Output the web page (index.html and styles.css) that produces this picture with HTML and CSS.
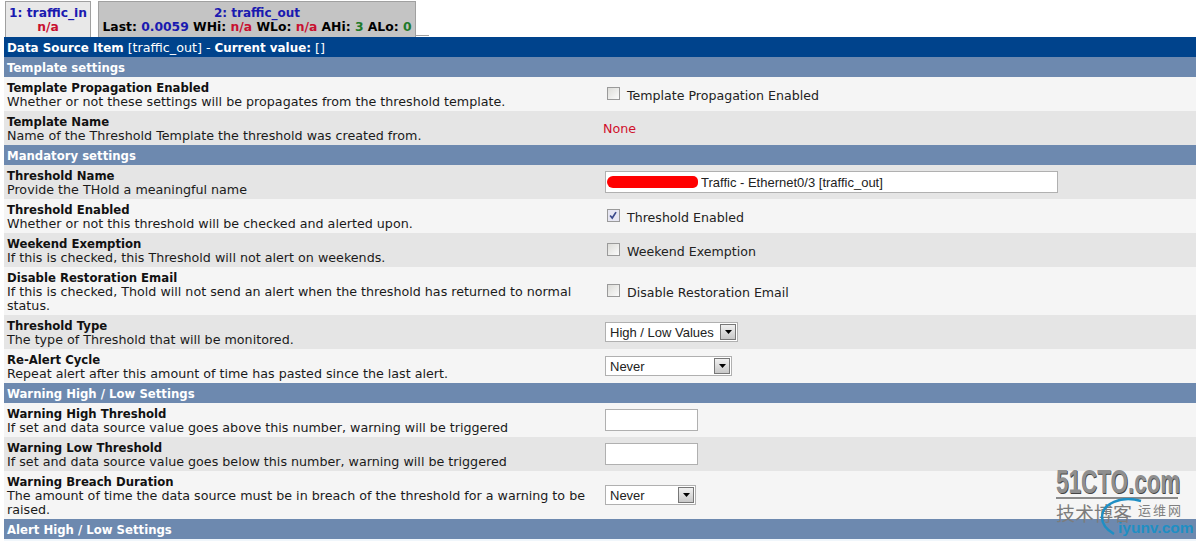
FILE: index.html
```html
<!DOCTYPE html>
<html lang="en">
<head>
<meta charset="utf-8">
<title>Thold</title>
<link rel="stylesheet" href="styles.css">
</head>
<body>
<div class="tabs">
  <div class="tab tab-first"><div class="ds">1: traffic_in</div><div class="na">n/a</div></div>
  <div class="tab tab-active"><div class="ds ds-two">2: traffic_out</div><div class="stats">Last: <span class="blue">0.0059</span> WHi: <span class="na">n/a</span> WLo: <span class="na">n/a</span> AHi: <span class="green">3</span> ALo: <span class="green">0</span></div></div>
  <div class="tab-line"></div>
</div>
<div class="panel">
  <div class="title"><b>Data Source Item</b> [traffic_out] - <b>Current value:</b> []</div>
  <div class="section">Template settings</div>
  <div class="row light"><div class="desc"><b>Template Propagation Enabled</b><br>Whether or not these settings will be propagates from the threshold template.</div><div class="ctl"><label class="check"><span class="box"></span>Template Propagation Enabled</label></div></div>
  <div class="row dark"><div class="desc"><b>Template Name</b><br>Name of the Threshold Template the threshold was created from.</div><div class="ctl none">None</div></div>
  <div class="section">Mandatory settings</div>
  <div class="row dark"><div class="desc"><b>Threshold Name</b><br>Provide the THold a meaningful name</div><div class="ctl"><div class="name-wrap"><input class="text name" type="text" value="Traffic - Ethernet0/3 [traffic_out]"><span class="scribble"></span></div></div></div>
  <div class="row light"><div class="desc"><b>Threshold Enabled</b><br>Whether or not this threshold will be checked and alerted upon.</div><div class="ctl"><label class="check"><span class="box checked"><svg viewBox="0 0 13 13" width="11" height="11"><path d="M2.5 6.5 L5 9.5 L9.5 2.5" fill="none" stroke="#3b4a8c" stroke-width="2"/></svg></span>Threshold Enabled</label></div></div>
  <div class="row dark"><div class="desc"><b>Weekend Exemption</b><br>If this is checked, this Threshold will not alert on weekends.</div><div class="ctl"><label class="check"><span class="box"></span>Weekend Exemption</label></div></div>
  <div class="row light"><div class="desc"><b>Disable Restoration Email</b><br>If this is checked, Thold will not send an alert when the threshold has returned to normal status.</div><div class="ctl"><label class="check"><span class="box"></span>Disable Restoration Email</label></div></div>
  <div class="row dark"><div class="desc"><b>Threshold Type</b><br>The type of Threshold that will be monitored.</div><div class="ctl"><div class="select w-type"><span class="val">High / Low Values</span><span class="arrow"><svg viewBox="0 0 7 4" width="7" height="4"><path d="M0 0H7L3.5 4Z" fill="#000"/></svg></span></div></div></div>
  <div class="row light"><div class="desc"><b>Re-Alert Cycle</b><br>Repeat alert after this amount of time has pasted since the last alert.</div><div class="ctl"><div class="select w-cycle"><span class="val">Never</span><span class="arrow"><svg viewBox="0 0 7 4" width="7" height="4"><path d="M0 0H7L3.5 4Z" fill="#000"/></svg></span></div></div></div>
  <div class="section">Warning High / Low Settings</div>
  <div class="row light"><div class="desc"><b>Warning High Threshold</b><br>If set and data source value goes above this number, warning will be triggered</div><div class="ctl"><input class="text small" type="text"></div></div>
  <div class="row dark"><div class="desc"><b>Warning Low Threshold</b><br>If set and data source value goes below this number, warning will be triggered</div><div class="ctl"><input class="text small" type="text"></div></div>
  <div class="row light"><div class="desc"><b>Warning Breach Duration</b><br>The amount of time the data source must be in breach of the threshold for a warning to be raised.</div><div class="ctl"><div class="select w-breach"><span class="val">Never</span><span class="arrow"><svg viewBox="0 0 7 4" width="7" height="4"><path d="M0 0H7L3.5 4Z" fill="#000"/></svg></span></div></div></div>
  <div class="section">Alert High / Low Settings</div>
</div>
<div class="watermark">
  <div class="wm-51">51CTO.com</div>
  <div class="wm-rule"></div>
  <div class="wm-tech">技术博客</div>
  <div class="wm-ops">运维网</div>
  <div class="wm-iyunv">iyunv.com</div>
  <svg class="wm-arc" viewBox="0 0 50 40" width="50" height="40"><path d="M44 3 C24 -3 5 6 5 19 C5 27 10 32 17 36" fill="none" stroke="#1f8fc4" stroke-width="2.5"/></svg>
</div>
</body>
</html>
```
FILE: styles.css
```css
html, body {
  margin: 0;
  padding: 0;
  background: #fff;
}
body {
  position: relative;
  width: 1199px;
  height: 541px;
  overflow: hidden;
  padding-left: 4px;
  padding-right: 3px;
  box-sizing: border-box;
  font-family: "DejaVu Sans", Verdana, sans-serif;
  font-size: 12.7px;
  line-height: 14px;
  color: #000;
}
b {
  font-size: 11.7px;
}
.tabs {
  display: flex;
  gap: 7px;
  height: 37px;
  margin-left: 1px;
  align-items: flex-end;
}
.tab {
  height: 36px;
  box-sizing: border-box;
  border: 1px solid #a0a0a0;
  border-bottom: 0;
  text-align: center;
  padding: 4px 0 0;
  font-weight: bold;
  font-size: 12.3px;
  line-height: 14px;
  white-space: nowrap;
}
.ds-two {
  font-size: 12px;
}
.stats {
  font-size: 12.35px;
}
.tab-first {
  width: 86px;
  background: #e8e8e8;
}
.tab-active {
  width: 318px;
  background: #c4c4c4;
}
.tab-line {
  width: 13px;
  height: 1px;
  margin-left: -7px;
  margin-bottom: 1px;
  background: #a0a0a0;
}
.ds { color: #1a1ab0; }
.na { color: #c81030; }
.blue { color: #1a1ab0; }
.green { color: #1f7a2a; }
.panel {
  width: 1192px;
  background: #f0f6fb;
  height: 504px;
}
.title {
  height: 20px;
  background: #00438c;
  color: #fff;
  line-height: 21px;
  padding-left: 3px;
}
.title b {
  font-size: 11.9px;
}
.section {
  height: 20px;
  background: #6d89af;
  color: #fff;
  font-weight: bold;
  font-size: 11.7px;
  line-height: 22px;
  padding-left: 3px;
}
.row {
  display: flex;
  align-items: center;
  min-height: 34px;
  color: #1a1a1a;
}
.light { background: #f5f5f5; }
.dark { background: #e5e5e5; }
.desc {
  width: 601px;
  box-sizing: border-box;
  padding: 4px 15px 2px 3px;
  flex: none;
}
.desc b { color: #111; }
.ctl {
  flex: 1;
}
.check {
  display: flex;
  align-items: center;
  gap: 7px;
  padding: 4px 0 0 2px;
  font-size: 12.6px;
  color: #222;
}
.box {
  width: 13px;
  height: 13px;
  box-sizing: border-box;
  border: 1px solid #9a9a9a;
  background: linear-gradient(135deg, #dcdcd8, #fbfbfb);
  display: flex;
  align-items: center;
  justify-content: center;
  position: relative;
  top: -3px;
}
.checked { background: #e6e6f2; }
.none {
  color: #d0102c;
  margin-left: -2px;
  padding-top: 2px;
}
.name-wrap {
  position: relative;
  width: 453px;
}
.text {
  display: block;
  box-sizing: border-box;
  border: 1px solid #b0b0b0;
  background: #fff;
  height: 22px;
  margin: 0;
  outline: 0;
  font-family: "Liberation Sans", Arial, sans-serif;
  font-size: 13px;
  color: #222;
}
.name {
  width: 453px;
  padding: 0 0 0 95px;
}
.small {
  width: 93px;
  padding: 0 3px;
}
.scribble {
  position: absolute;
  left: 2px;
  top: 5px;
  width: 91px;
  height: 12px;
  border-radius: 6px 5px 5px 6px;
  background: #f00;
}
.select {
  display: flex;
  align-items: center;
  justify-content: space-between;
  box-sizing: border-box;
  height: 20px;
  border: 1px solid #b0b0b0;
  background: #fff;
  font-family: "Liberation Sans", Arial, sans-serif;
  font-size: 13px;
  color: #222;
  padding-left: 4px;
}
.val {
  padding-top: 1px;
}
.w-type { width: 133px; }
.w-cycle { width: 127px; }
.w-breach { width: 91px; }
.arrow {
  width: 16px;
  height: 16px;
  margin-right: 1px;
  box-sizing: border-box;
  border: 1px solid #777;
  background: linear-gradient(180deg, #f0f0f0, #c8c8c8);
  display: flex;
  align-items: center;
  justify-content: center;
}
.watermark {
  position: absolute;
  left: 1050px;
  top: 465px;
  width: 149px;
  height: 76px;
}
.wm-51 {
  position: absolute;
  left: 6px;
  top: 2px;
  font-family: "Liberation Sans", Arial, sans-serif;
  font-weight: bold;
  font-size: 34px;
  line-height: 28px;
  color: #8f8f8f;
  white-space: nowrap;
  transform: scaleX(0.66);
  transform-origin: left;
  text-shadow: 1px 1px 0 #444;
}
.wm-rule {
  position: absolute;
  left: 6px;
  top: 32px;
  width: 122px;
  height: 2px;
  background: #8a8a8a;
}
.wm-tech {
  position: absolute;
  left: 6px;
  top: 38px;
  font-family: "Noto Sans CJK SC", sans-serif;
  font-size: 19px;
  line-height: 20px;
  color: #7c7c7c;
  white-space: nowrap;
}
.wm-ops {
  position: absolute;
  left: 88px;
  top: 37px;
  font-family: "Noto Sans CJK SC", sans-serif;
  font-size: 13px;
  letter-spacing: 2px;
  line-height: 16px;
  color: #808080;
  white-space: nowrap;
}
.wm-iyunv {
  position: absolute;
  left: 68px;
  top: 54px;
  font-family: "Liberation Sans", Arial, sans-serif;
  font-weight: bold;
  font-size: 15.5px;
  line-height: 17px;
  color: #1f8fc4;
  white-space: nowrap;
}
.wm-arc {
  position: absolute;
  left: 47px;
  top: 33px;
}
```
